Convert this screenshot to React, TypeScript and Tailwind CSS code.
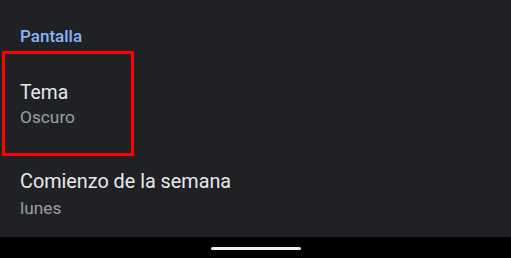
import React from "react";

export default function App() {
  const font = { fontFamily: "Roboto, 'Noto Sans', sans-serif" };
  return (
    <div className="w-[511px] h-[258px] flex flex-col overflow-hidden" style={font}>
      <div className="h-[237px] bg-[#202124] flex flex-col">
        <div className="pt-[26px] pl-5 text-[17px] leading-[20px] font-medium text-[#8ab4f8]">
          Pantalla
        </div>
        <div className="mt-[5px] ml-[2px] w-[132px] h-[105px] border-[3px] border-[#ff0000] pl-[15px] pt-[27px] flex flex-col">
          <div className="text-[19.3px] leading-[24px] text-[#e8eaed]">Tema</div>
          <div className="text-[17.3px] leading-[24px] text-[#9aa0a6]">Oscuro</div>
        </div>
        <div className="pl-5 pt-[14px] flex flex-col">
          <div className="text-[19.8px] leading-[24px] text-[#e8eaed]">Comienzo de la semana</div>
          <div className="mt-[2px] text-[17.3px] leading-[24px] text-[#9aa0a6]">lunes</div>
        </div>
      </div>
      <div className="flex-1 bg-black flex items-start justify-center pt-[10px]">
        <div className="w-[90px] h-[3px] rounded-full bg-[#f1f1f1]" />
      </div>
    </div>
  );
}
